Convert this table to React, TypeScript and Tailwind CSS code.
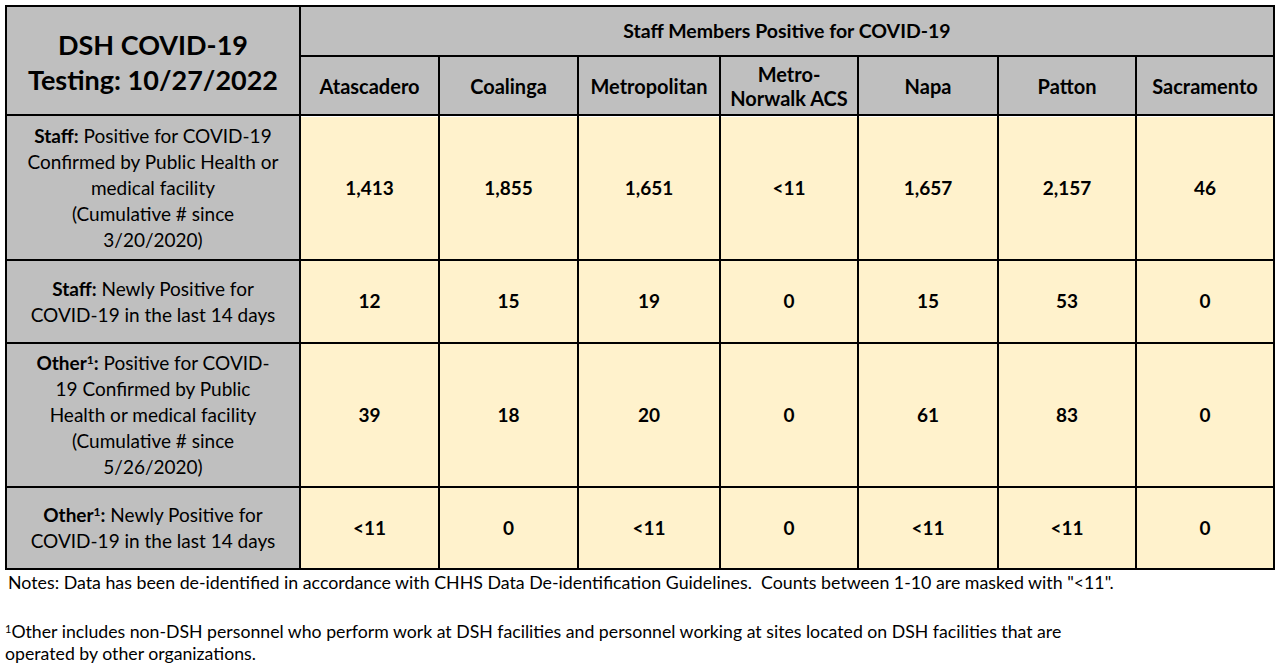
import React from "react";

const cols = ["Atascadero", "Coalinga", "Metropolitan", "Metro-Norwalk ACS", "Napa", "Patton", "Sacramento"];

const Sup = () => <sup className="text-[12px]">1</sup>;

const rows: { label: React.ReactNode; values: string[]; h: string }[] = [
  {
    label: (
      <>
        <span className="font-bold">Staff:</span> Positive for COVID-19
        <br />
        Confirmed by Public Health or
        <br />
        medical facility
        <br />
        (Cumulative # since
        <br />
        3/20/2020)
      </>
    ),
    values: ["1,413", "1,855", "1,651", "<11", "1,657", "2,157", "46"],
    h: "h-[143px]",
  },
  {
    label: (
      <>
        <span className="font-bold">Staff:</span> Newly Positive for
        <br />
        COVID-19 in the last 14 days
      </>
    ),
    values: ["12", "15", "19", "0", "15", "53", "0"],
    h: "h-[81px]",
  },
  {
    label: (
      <>
        <span className="font-bold">
          Other
          <Sup />:
        </span>{" "}
        Positive for COVID-
        <br />
        19 Confirmed by Public
        <br />
        Health or medical facility
        <br />
        (Cumulative # since
        <br />
        5/26/2020)
      </>
    ),
    values: ["39", "18", "20", "0", "61", "83", "0"],
    h: "h-[142px]",
  },
  {
    label: (
      <>
        <span className="font-bold">
          Other
          <Sup />:
        </span>{" "}
        Newly Positive for
        <br />
        COVID-19 in the last 14 days
      </>
    ),
    values: ["<11", "0", "<11", "0", "<11", "<11", "0"],
    h: "h-[80px]",
  },
];

export default function App() {
  return (
    <div
      className="w-[1283px] h-[669px] bg-white text-black overflow-hidden"
      style={{ fontFamily: "Lato, 'Liberation Sans', sans-serif" }}
    >
      <div className="pt-[5px] pl-[5px]">
        <div className="w-[1270px] bg-black p-[2px] grid grid-cols-[292px_137px_137px_140px_136px_138px_136px_136px] gap-[2px]">
          {/* Title */}
          <div className="row-span-2 bg-[#bfbfbf] flex items-center justify-center text-center font-bold text-[27px] leading-[35px] pt-[2px]">
            DSH COVID-19
            <br />
            Testing: 10/27/2022
          </div>
          <div className="col-span-7 h-[48px] bg-[#bfbfbf] flex items-center justify-center font-bold text-[19.5px]">
            Staff Members Positive for COVID-19
          </div>
          {cols.map((c) => (
            <div
              key={c}
              className="h-[57px] bg-[#bfbfbf] flex items-center justify-center text-center font-bold text-[20px] leading-[24px] px-[4px]"
            >
              {c === "Metro-Norwalk ACS" ? (
                <span>
                  Metro-
                  <br />
                  Norwalk ACS
                </span>
              ) : (
                c
              )}
            </div>
          ))}
          {rows.map((r, i) => (
            <React.Fragment key={i}>
              <div
                className={`${r.h} bg-[#bfbfbf] flex items-center justify-center text-center text-[19px] leading-[26px]`}
              >
                <div>{r.label}</div>
              </div>
              {r.values.map((v, j) => (
                <div
                  key={j}
                  className={`${r.h} bg-[#fff2cc] flex items-center justify-center font-bold text-[19px] ${
                    i === 0 ? "border-t border-white" : ""
                  }`}
                >
                  {v}
                </div>
              ))}
            </React.Fragment>
          ))}
        </div>
        <div className="text-[17.8px] leading-[22px] pl-[3px] pt-[1px] whitespace-nowrap">
          Notes: Data has been de-identified in accordance with CHHS Data De-identification Guidelines.&nbsp; Counts
          between 1-10 are masked with "&lt;11".
        </div>
        <div className="text-[17.7px] leading-[22px] pl-[0px] mt-[28px] whitespace-nowrap">
          <sup className="text-[11px]">1</sup>Other includes non-DSH personnel who perform work at DSH facilities and
          personnel working at sites located on DSH facilities that are
          <br />
          operated by other organizations.
        </div>
      </div>
    </div>
  );
}
